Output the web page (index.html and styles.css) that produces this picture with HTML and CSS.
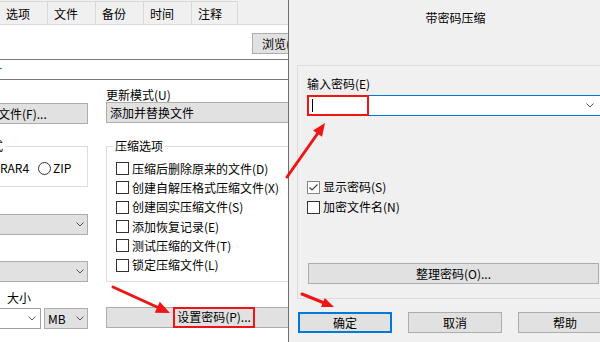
FILE: index.html
```html
<!DOCTYPE html>
<html lang="zh-CN">
<head>
<meta charset="utf-8">
<title>带密码压缩</title>
<link rel="stylesheet" href="styles.css">
</head>
<body>
<div class="screen">
  <section class="main">
    <div class="tabs">
      <div class="tab">选项</div>
      <div class="tab">文件</div>
      <div class="tab">备份</div>
      <div class="tab">时间</div>
      <div class="tab tab-last">注释</div>
    </div>
    <div class="page">
      <div class="browse-row"><button class="btn browse">浏览(B)...</button></div>
      <div class="path-field"><span class="path-text">r</span></div>
      <div class="cols">
        <div class="col col-left">
          <button class="btn profile-btn">文件(F)...</button>
          <fieldset class="group group-format">
            <legend>式</legend>
            <div class="radio-row">
              <span class="rar4">RAR4</span>
              <span class="radio"></span>
              <span>ZIP</span>
            </div>
          </fieldset>
          <div class="combo combo-a"><span class="chev"><svg width="8" height="5" viewBox="0 0 8 5"><path d="M0.5 0.5 L4 4 L7.5 0.5" fill="none" stroke="#555" stroke-width="1"/></svg></span></div>
          <div class="combo combo-b"><span class="chev"><svg width="8" height="5" viewBox="0 0 8 5"><path d="M0.5 0.5 L4 4 L7.5 0.5" fill="none" stroke="#555" stroke-width="1"/></svg></span></div>
          <div class="size-label">大小</div>
          <div class="size-row">
            <div class="combo edit-combo"><span class="chev"><svg width="8" height="5" viewBox="0 0 8 5"><path d="M0.5 0.5 L4 4 L7.5 0.5" fill="none" stroke="#555" stroke-width="1"/></svg></span></div>
            <div class="combo unit-combo"><span class="unit">MB</span><span class="chev"><svg width="8" height="5" viewBox="0 0 8 5"><path d="M0.5 0.5 L4 4 L7.5 0.5" fill="none" stroke="#555" stroke-width="1"/></svg></span></div>
          </div>
        </div>
        <div class="col col-right">
          <div class="field-label">更新模式(U)</div>
          <div class="combo update-combo"><span class="combo-text">添加并替换文件</span></div>
          <fieldset class="group group-options">
            <legend>压缩选项</legend>
            <div class="check-row"><span class="cb"></span><span>压缩后删除原来的文件(D)</span></div>
            <div class="check-row"><span class="cb"></span><span>创建自解压格式压缩文件(X)</span></div>
            <div class="check-row"><span class="cb"></span><span>创建固实压缩文件(S)</span></div>
            <div class="check-row"><span class="cb"></span><span>添加恢复记录(E)</span></div>
            <div class="check-row"><span class="cb"></span><span>测试压缩的文件(T)</span></div>
            <div class="check-row"><span class="cb"></span><span>锁定压缩文件(L)</span></div>
          </fieldset>
          <button class="btn setpw-btn"><span class="redbox">设置密码(P)...</span></button>
        </div>
      </div>
    </div>
  </section>

  <section class="dialog">
    <div class="dlg-title">带密码压缩</div>
    <div class="panel">
      <div class="field-label">输入密码(E)</div>
      <div class="pw-combo">
        <span class="pw-redbox"><span class="caret"></span></span>
        <span class="chev pw-chev"><svg width="8" height="5" viewBox="0 0 8 5"><path d="M0.5 0.5 L4 4 L7.5 0.5" fill="none" stroke="#555" stroke-width="1"/></svg></span>
      </div>
      <div class="pw-checks">
        <div class="check-row2"><span class="cb cb-checked"><svg width="11" height="11" viewBox="0 0 11 11"><path d="M1.5 5.5 L4 8 L9.5 2.5" fill="none" stroke="#444" stroke-width="1.2"/></svg></span><span>显示密码(S)</span></div>
        <div class="check-row2"><span class="cb"></span><span>加密文件名(N)</span></div>
      </div>
      <button class="btn organize-btn">整理密码(O)...</button>
    </div>
    <div class="footer">
      <button class="btn foot-btn default-btn">确定</button>
      <button class="btn foot-btn">取消</button>
      <button class="btn foot-btn">帮助</button>
    </div>
  </section>

  <svg class="arrows" width="600" height="342" viewBox="0 0 600 342">
    <g stroke="#f01414" stroke-width="3" stroke-linecap="round" fill="none">
      <line x1="113" y1="287" x2="158" y2="307.5"/>
      <line x1="287" y1="177" x2="318" y2="133"/>
      <line x1="302" y1="294" x2="323" y2="302.5"/>
    </g>
    <g fill="#f01414">
      <polygon points="170,313 154.8,312.7 159.8,301.7"/>
      <polygon points="325,123 322,136.8 313,130.4"/>
      <polygon points="334,307 321,307.1 324.8,297.9"/>
    </g>
  </svg>
</div>
</body>
</html>
```

FILE: styles.css
```css
* { box-sizing: border-box; }

html, body {
  margin: 0;
  padding: 0;
}

body {
  width: 600px;
  height: 342px;
  overflow: hidden;
  font-family: "Noto Sans CJK SC", "Noto Sans", sans-serif;
  font-size: 12px;
  line-height: 14px;
  color: #000;
  background: #f0f0f0;
}

.screen {
  position: relative;
  display: flex;
  width: 600px;
  height: 342px;
  overflow: hidden;
}

button {
  font: inherit;
  color: #000;
  margin: 0;
}

/* ---------- left (main) dialog ---------- */
.main {
  width: 288px;
  flex: none;
  overflow: hidden;
  background: #fff;
  display: flex;
  flex-direction: column;
}

.tabs {
  display: flex;
  height: 25px;
  padding-top: 1px;
  background: #f0f0f0;
  border-bottom: 1px solid #d9d9d9;
  flex: none;
}

.tab {
  height: 23px;
  padding: 2px 17px 0 6px;
  display: flex;
  align-items: center;
  border-top: 1px solid #d9d9d9;
  border-right: 1px solid #d9d9d9;
  background: #f0f0f0;
}

.tab-last { padding-right: 15px; }

.page {
  width: 336px;
  flex: 1;
  background: #fff;
  display: flex;
  flex-direction: column;
}

.btn {
  height: 21px;
  background: #e1e1e1;
  border: 1px solid #adadad;
  padding: 0;
  display: flex;
  align-items: center;
  justify-content: center;
  line-height: 14px;
}

.browse-row {
  display: flex;
  justify-content: flex-end;
  padding: 8px 8px 0 0;
}

.browse {
  width: 76px;
  justify-content: flex-start;
  padding-left: 9px;
}

.path-field {
  margin-top: 5px;
  height: 21px;
  border-top: 1px solid #7a7a7a;
  border-bottom: 1px solid #7a7a7a;
  background: #fff;
  display: flex;
  align-items: center;
}

.path-text {
  margin-left: -3px;
  color: #0066cc;
}

.cols {
  display: grid;
  grid-template-columns: 98px 216px;
  column-gap: 18px;
  margin-left: -10px;
  align-items: start;
}

.col {
  display: flex;
  flex-direction: column;
}

.profile-btn {
  margin-top: 23px;
  justify-content: flex-start;
  padding-left: 7px;
}

.group {
  margin: 0;
  min-width: 0;
  border: 1px solid #dcdcdc;
}

.group legend {
  padding: 0 2px;
  line-height: 14px;
}

.group-format {
  margin-top: 15px;
  padding: 5px 0 8px 9px;
}

.group-format legend { margin-left: -11px; }

.radio-row {
  display: flex;
  align-items: center;
  height: 20px;
}

.rar4 { width: 38px; flex: none; }

.radio {
  width: 13px;
  height: 13px;
  border: 1px solid #333;
  border-radius: 50%;
  background: #fff;
  margin-right: 2px;
  flex: none;
}

.combo {
  height: 21px;
  background: #e1e1e1;
  border: 1px solid #adadad;
  display: flex;
  align-items: center;
}

.chev {
  margin-left: auto;
  margin-right: 3px;
  width: 8px;
  height: 5px;
  display: flex;
}

.chev svg { display: block; }

.combo-a { margin-top: 27px; }
.combo-b { margin-top: 26px; }

.size-label {
  margin-top: 9px;
  padding-left: 17px;
}

.size-row {
  margin-top: 3px;
  display: flex;
  gap: 3px;
}

.edit-combo {
  width: 51px;
  background: #fff;
  border-color: #a0a0a0;
}

.edit-combo .chev { margin-right: 4px; }

.unit-combo { width: 44px; }

.unit { padding-left: 3px; }

.field-label { margin-top: 8px; }

.update-combo { }

.combo-text { padding-left: 3px; }

.group-options {
  margin-top: 16px;
  padding: 6px 0 6px 9px;
}

.group-options legend { margin-left: -3px; }

.check-row {
  display: flex;
  align-items: center;
  gap: 3px;
  height: 19.3px;
}

.cb {
  width: 13px;
  height: 13px;
  border: 1px solid #333;
  background: #fff;
  flex: none;
  display: flex;
  align-items: center;
  justify-content: center;
}

.cb-checked { border-color: #858585; }

.setpw-btn {
  margin-top: 25px;
  align-items: stretch;
}

.redbox {
  display: flex;
  align-items: center;
  border: 2px solid #f01414;
  padding: 0 2px;
  margin: -1px 0;
}

/* ---------- right dialog ---------- */
.dialog {
  width: 334px;
  flex: none;
  border-left: 1px solid #6e6e6e;
  background: #f0f0f0;
  display: flex;
  flex-direction: column;
}

.dlg-title {
  padding-top: 11px;
  height: 25px;
  text-align: center;
}

.panel {
  margin: 40px 0 0 8px;
  width: 317px;
  border: 1px solid #dcdcdc;
  padding: 11px 9px 14px 9px;
  display: flex;
  flex-direction: column;
}

.panel .field-label { margin-top: 0; }

.pw-combo {
  margin-top: 4px;
  height: 21px;
  background: #fff;
  border: 1px solid #0078d7;
  display: flex;
  align-items: stretch;
}

.pw-redbox {
  width: 62px;
  margin: -1px 0 -1px -1px;
  border: 2px solid #f01414;
  padding-left: 3px;
  display: flex;
  align-items: center;
}

.caret {
  width: 1px;
  height: 13px;
  background: #000;
}

.pw-chev {
  align-self: center;
  margin-right: 9px;
}

.pw-checks {
  margin-top: 61px;
  display: flex;
  flex-direction: column;
}

.check-row2 {
  display: flex;
  align-items: center;
  gap: 3px;
  height: 20px;
}

.organize-btn {
  margin: 46px 0 0 1px;
  width: 291px;
}

.footer {
  margin: 13px 0 0 9px;
  display: flex;
  gap: 16px;
}

.foot-btn { width: 94px; flex: none; }

.default-btn { border: 2px solid #0078d7; }

/* ---------- annotation arrows ---------- */
.arrows {
  position: absolute;
  left: 0;
  top: 0;
  pointer-events: none;
}
```
